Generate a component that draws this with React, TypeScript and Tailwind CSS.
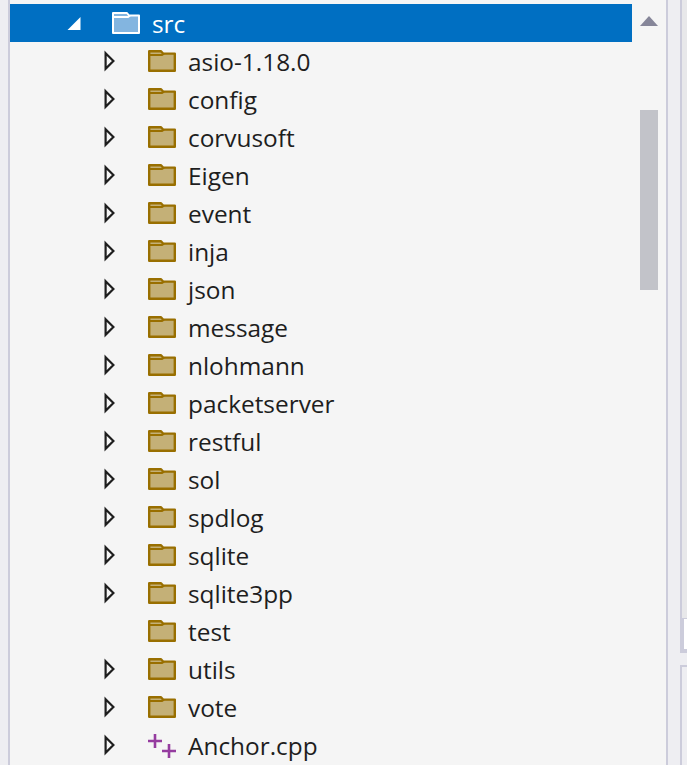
const items = [
  'asio-1.18.0', 'config', 'corvusoft', 'Eigen', 'event', 'inja', 'json', 'message', 'nlohmann',
  'packetserver', 'restful', 'sol', 'spdlog', 'sqlite', 'sqlite3pp', 'test', 'utils', 'vote',
];

function Arrow() {
  return (
    <svg width="12" height="22" viewBox="0 0 12 22" className="shrink-0">
      <path d="M2.6 3.2 L10.4 11 L2.6 18.8 Z" fill="none" stroke="#1e1e1e" strokeWidth="2.2" />
    </svg>
  );
}

function Folder() {
  return (
    <svg width="28" height="22" viewBox="0 0 28 22" className="shrink-0">
      <path d="M1.2 1.2 H13 L15 3.6 H26.8 V20.8 H1.2 Z" fill="#c4b077" stroke="#996f00" strokeWidth="2.4" strokeLinejoin="round" />
      <path d="M1.2 5 H14 L16 3.6" fill="none" stroke="#996f00" strokeWidth="2" />
    </svg>
  );
}

function OpenFolder() {
  return (
    <svg width="28" height="22" viewBox="0 0 28 22" className="shrink-0">
      <path d="M1 1 H15 L17 3.5 H27 V21 H1 Z" fill="#83b5e0" stroke="#fff" strokeWidth="2" strokeLinejoin="round" />
      <path d="M1 5 H16 L18 3.5" fill="none" stroke="#fff" strokeWidth="2" />
    </svg>
  );
}

function PlusPlus() {
  return (
    <svg width="28" height="26" viewBox="0 0 28 26" className="shrink-0">
      <path d="M7 2 V16 M0 9 H14 M21 12 V26 M14 19 H28" fill="none" stroke="#953c9f" strokeWidth="2.6" />
    </svg>
  );
}

function Row({ children }: { children: React.ReactNode }) {
  return <div className="flex h-[38px] items-center">{children}</div>;
}

export default function App() {
  return (
    <div className="flex h-[765px] w-[687px] overflow-hidden bg-[#eeeef2] font-['Segoe_UI','Open_Sans','Noto_Sans',sans-serif] text-[24.4px] text-[#1e1e1e]">
      <div className="w-[10px] shrink-0 border-r-2 border-[#ccccdb]" />
      <div className="flex w-[658px] shrink-0 border-r-2 border-[#ccccdb] bg-[#f5f5f5]">
        <div className="w-[622px] shrink-0 pt-[4px]">
          <div className="flex h-[38px] items-center bg-[#006fc2] text-white">
            <svg width="14" height="14" viewBox="0 0 14 14" className="ml-[57px] shrink-0">
              <path d="M13.5 1 V14 H0.5 Z" fill="#fff" />
            </svg>
            <div className="ml-[31px]"><OpenFolder /></div>
            <span className="ml-[12px] pt-[3px]">src</span>
          </div>
          {items.map((name) => (
            <Row key={name}>
              <div className="ml-[93px] w-[12px]">{name !== 'test' && <Arrow />}</div>
              <div className="ml-[33px]"><Folder /></div>
              <span className="ml-[12px] pt-[2px]">{name}</span>
            </Row>
          ))}
          <Row>
            <div className="ml-[93px] w-[12px]"><Arrow /></div>
            <div className="ml-[33px]"><PlusPlus /></div>
            <span className="ml-[12px] pt-[2px]">Anchor.cpp</span>
          </Row>
        </div>
        <div className="flex flex-1 flex-col items-center">
          <svg width="18" height="10" viewBox="0 0 18 10" className="mt-[16px] shrink-0">
            <path d="M9 0 L18 10 H0 Z" fill="#868699" />
          </svg>
          <div className="mt-[84px] h-[180px] w-[18px] bg-[#c2c3c9]" />
        </div>
      </div>
      <div className="ml-[12px] flex min-w-0 flex-1 flex-col">
        <div className="flex h-[653px] flex-col border-b-4 border-l-2 border-[#ccccdb]">
          <div className="h-[618px] bg-[#e8e8ea]" />
          <div className="flex-1 border-l-2 border-t border-[#ccccdb] bg-white" />
        </div>
        <div className="mt-[12px] flex-1 border-l-2 border-t-2 border-[#ccccdb]" />
      </div>
    </div>
  );
}
